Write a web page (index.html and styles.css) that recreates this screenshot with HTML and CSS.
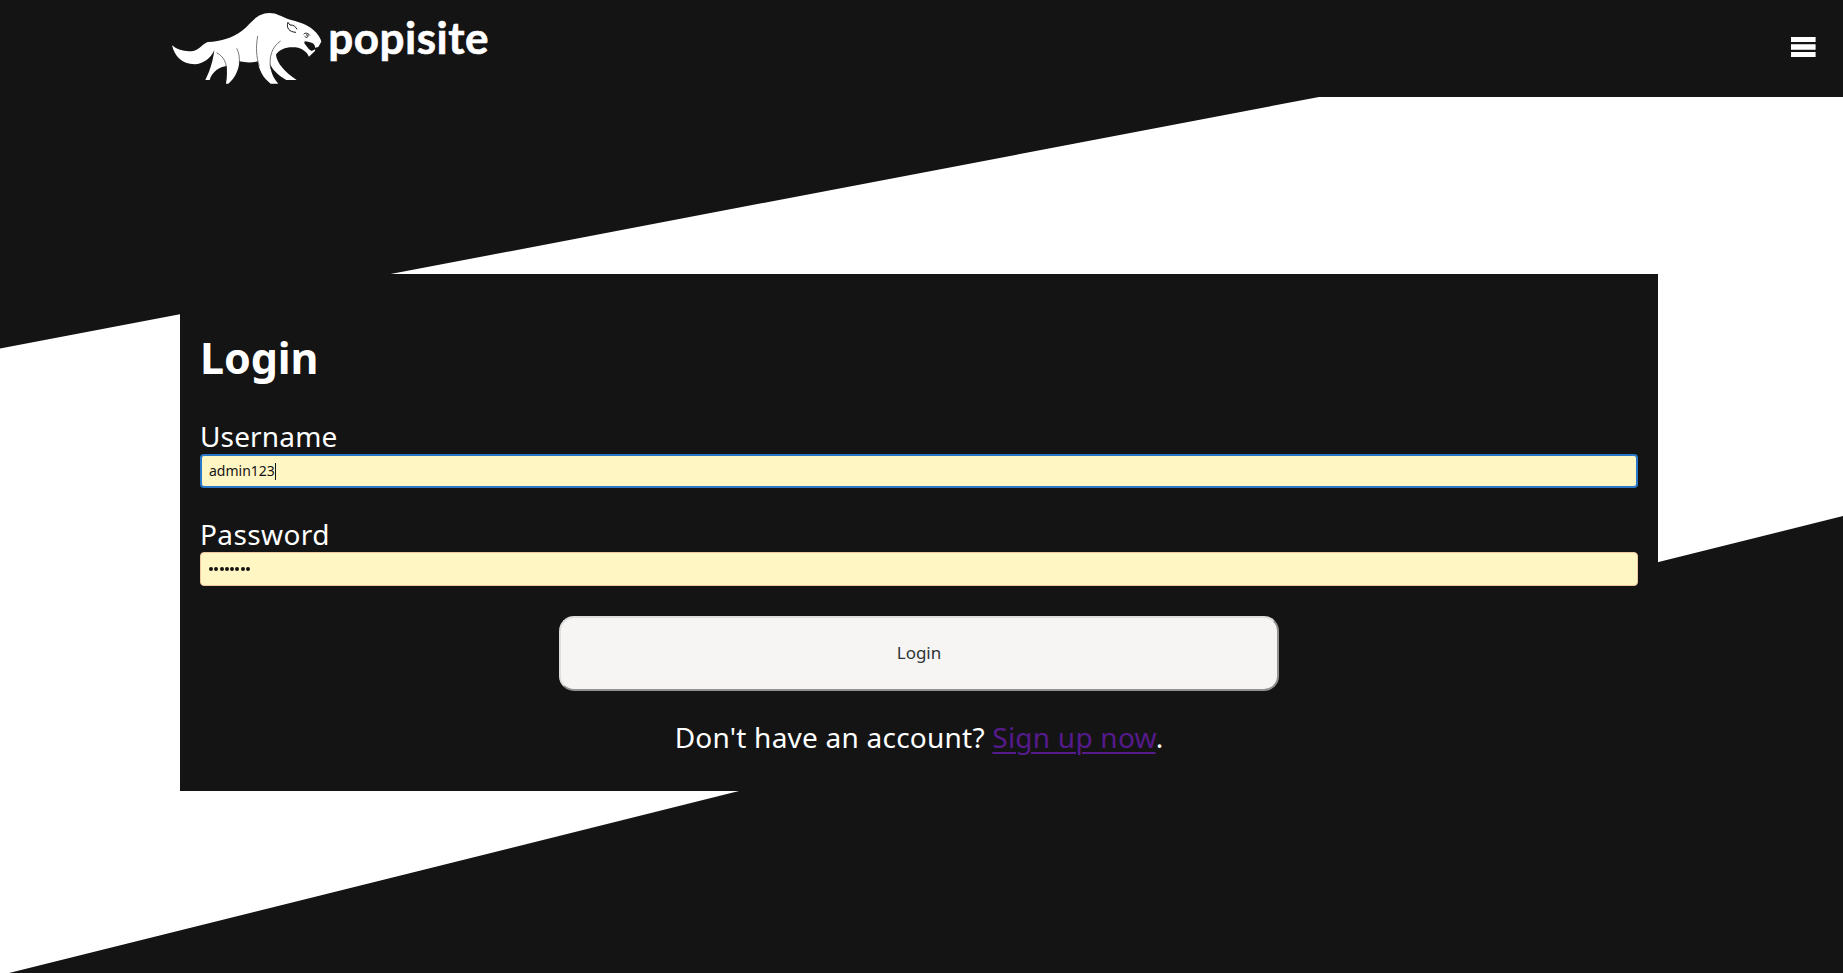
FILE: index.html
```
<!DOCTYPE html>
<html lang="en">
<head>
<meta charset="utf-8">
<title>popisite</title>
<link rel="stylesheet" href="styles.css">
</head>
<body>
<header class="header">
  <a class="brand">
    <svg class="brand-animal" viewBox="30 30 460 230">
      <path class="animal-body" d="M36 136C54 151 76 156 100 153C119 149 127 132 143 126C184 125 218 114 248 91C275 69 288 40 328 39C351 39 364 50 384 57C409 65 435 70 453 84C468 96 480 108 484 125L475 141L465 143C467 132 455 126 434 124L433 130L447 148L455 153L466 148L465 153L447 170C441 156 428 146 407 142C382 139 358 147 348 164C351 189 373 214 410 240H379C352 225 333 205 331 190C331 215 340 235 355 251H332C309 234 298 211 293 184C276 189 256 188 238 184C237 207 227 233 205 251H198C201 233 202 217 200 198C179 201 157 213 149 240H136C146 220 157 195 163 151C151 176 130 192 104 193C65 192 44 169 36 136Z"/>
      <path class="animal-line" d="M170 158C192 170 202 190 199 220M230 145C237 158 239 170 238 190M293 108C287 145 289 170 298 198M362 123C336 140 326 170 332 207"/>
      <path class="animal-face" d="M384 67C378 84 388 96 408 97M384 67L390 75C401 74 407 80 411 88M431 103C435 97 444 99 450 106M434 109C440 115 445 112 444 105M438 105H443"/>
    </svg>
    <span class="brand-name">popisite</span>
  </a>
  <svg class="menu" viewBox="0 0 25 20"><path d="M0 0H24.6V5H0zM0 7.3H24.6V12.7H0zM0 15H24.6V20H0z"/></svg>
</header>
<main class="page">
  <form class="card">
    <h1 class="title">Login</h1>
    <label class="label" for="user">Username</label>
    <div class="field field-active" id="user"><span class="value">admin123</span><span class="caret"></span></div>
    <label class="label label-password" for="pass">Password</label>
    <div class="field" id="pass"><span class="dots"><i></i><i></i><i></i><i></i><i></i><i></i><i></i><i></i></span></div>
    <button class="submit" type="button">Login</button>
    <p class="signup">Don't have an account? <a class="link">Sign up now</a>.</p>
  </form>
</main>
</body>
</html>
```
FILE: styles.css
```
body {
  margin: 0;
  height: 973px;
  overflow: hidden;
  background: #fff;
  color: #fff;
  font-family: "Noto Sans", "Open Sans", sans-serif;
}
.header {
  display: flex;
  justify-content: space-between;
  align-items: flex-start;
  box-sizing: border-box;
  height: 97px;
  padding: 10px 27px 0 170px;
  background: #141414;
}
.brand { display: flex; }
.brand-animal { width: 153.3px; height: 76.7px; }
.animal-body { fill: #fff; }
.animal-line { fill: none; stroke: #333; stroke-width: 2; }
.animal-face { fill: none; stroke: #141414; stroke-width: 3; }
.brand-name {
  margin: -3px 0 0 5px;
  font: 700 44px/60px Lato, sans-serif;
  letter-spacing: 0.5px;
  -webkit-text-stroke: 0.6px #fff;
}
.menu { width: 25px; height: 20px; margin-top: 27px; fill: #fff; }
.page {
  box-sizing: border-box;
  height: 876px;
  padding: 177px 185px 0 180px;
  position: relative;
}
.page::before {
  content: "";
  position: absolute;
  inset: 0;
  background: #141414;
  clip-path: polygon(0 0, 1319px 0, 0 251.5px, 0 876px, 9px 876px, 1843px 419px, 1843px 876px, 0 876px);
}
.card {
  position: relative;
  box-sizing: border-box;
  display: flex;
  flex-direction: column;
  height: 517px;
  padding: 59px 20px 0;
  background: #141414;
}
.title {
  margin: 0 0 43px;
  font-size: 43px;
  line-height: 50px;
  letter-spacing: -0.1px;
}
.label {
  height: 28px;
  font-size: 28px;
  line-height: 20px;
  letter-spacing: 0.15px;
}
.label-password { margin-top: 36px; letter-spacing: 0.4px; }
.field {
  display: flex;
  align-items: center;
  box-sizing: border-box;
  height: 34px;
  padding: 0 8px;
  border: 1px solid #f0c8a0;
  border-radius: 4px;
  background: #fff6c4;
  color: #141414;
}
.field-active { border: 2px solid #2a76c9; padding: 0 7px; }
.value { font-size: 14px; line-height: 20px; }
.caret { width: 1px; height: 17px; background: #141414; }
.dots { display: flex; gap: 1.3px; }
.dots i { width: 4px; height: 4px; border-radius: 50%; background: #141414; }
.submit {
  width: 720px;
  height: 75px;
  margin: 30px 0 0 359px;
  padding: 0 0 2px;
  border: 2px solid;
  border-color: #dededc #929290 #929290 #dededc;
  border-radius: 15px;
  background: #f6f5f4;
  color: #2e3436;
  font: 17px/24px "Noto Sans", sans-serif;
}
.signup {
  margin: 26px 0 0;
  font-size: 28px;
  line-height: 40px;
  letter-spacing: 0.23px;
  text-align: center;
}
.link {
  color: #551a8b;
  text-decoration: underline;
  text-decoration-thickness: 2px;
  text-underline-offset: 4px;
}
```
